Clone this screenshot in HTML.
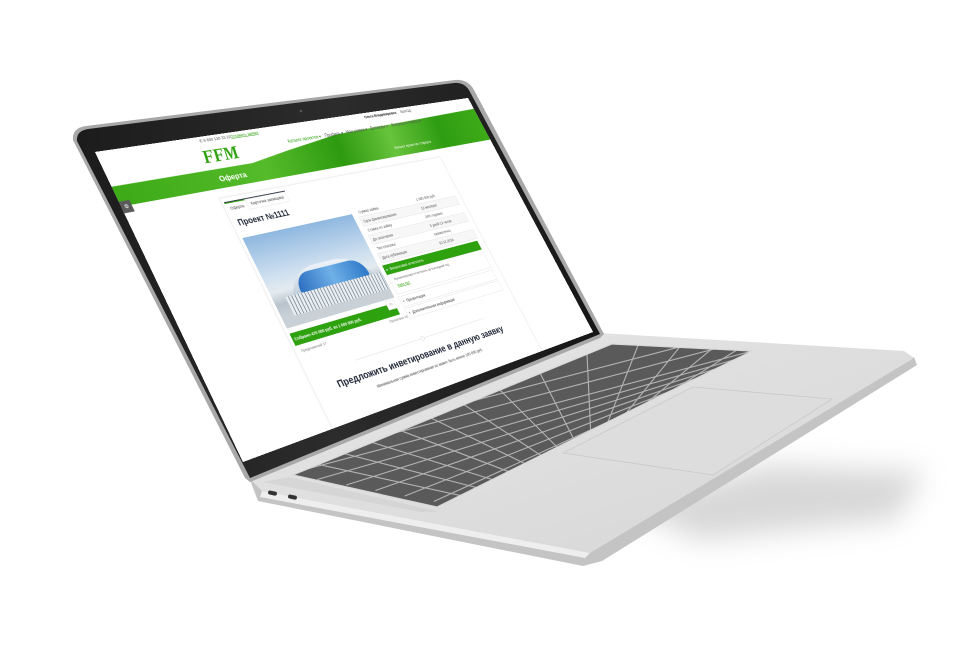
<!DOCTYPE html>
<html><head><meta charset="utf-8">
<style>
html,body{margin:0;padding:0;background:#fff;width:974px;height:649px;overflow:hidden;font-family:"Liberation Sans",sans-serif}
svg.lap{position:absolute;left:0;top:0}
#scr{position:absolute;left:0;top:0;width:1000px;height:625px;background:#fff;overflow:hidden;transform-origin:0 0;
transform:matrix3d(0.51409,-0.024455,0,0.00030148, 0.22048,0.46499,0,-0.00006713, 0,0,1,0, 95,152,0,1);}
#scr div,#scr span{position:absolute;white-space:nowrap}
.g{color:#2ea10f}
.nav{top:34px;font-size:10px;color:#555}
.row{left:510px;width:290px;height:21px;font-size:9px;color:#555}
.row .k{left:6px;top:6px}
.row .v{left:175px;top:6px}
.box{border:1px solid #e3e3e3;background:#fff}
</style></head><body>
<svg class="lap" width="974" height="649" viewBox="0 0 974 649">
<defs>
<filter id="bl" x="-50%" y="-50%" width="200%" height="200%"><feGaussianBlur stdDeviation="14"/></filter>
<linearGradient id="base" x1="0" y1="0" x2="1" y2="1">
<stop offset="0" stop-color="#e6e6e6"/><stop offset="1" stop-color="#d6d6d6"/></linearGradient>
<linearGradient id="bez" x1="0" y1="0" x2="1" y2="0">
<stop offset="0" stop-color="#1c1c1c"/><stop offset="0.5" stop-color="#2c2c2c"/><stop offset="1" stop-color="#161616"/></linearGradient>
<clipPath id="kb"><polygon points="293,475 612,344 752,351 660,396 437,507"/></clipPath>
</defs>
<polygon points="620,505 770,465 925,472 895,520 700,540" fill="#a8a8a8" opacity="0.45" filter="url(#bl)"/>
<polygon points="250,480 258,501 583,566 602,561 917,365 914,357" fill="#c4c4c4"/>
<polygon points="248,477 600,333 904,351 914,358 590,553 262,491" fill="url(#base)"/>
<polygon points="262,491 590,553 585,558 260,497" fill="#eeeeee"/>
<polygon points="563,453 693,387 832,399 713,475" fill="#dddddd" stroke="#c9c9c9" stroke-width="0.8"/>
<g clip-path="url(#kb)">
<polygon points="293,475 612,344 752,351 660,396 437,507" fill="#5a5a5a"/>
<g stroke="#b4b4b4" stroke-width="1.1">
<line x1="288" y1="474" x2="756" y2="350"/>
<line x1="288" y1="461" x2="756" y2="338"/>
<line x1="288" y1="449" x2="756" y2="327"/>
<line x1="317.2" y1="479.5" x2="740.3" y2="358"/>
<line x1="346.3" y1="485" x2="724.7" y2="366"/>
<line x1="375.5" y1="490.5" x2="709" y2="374"/>
<line x1="404.7" y1="496" x2="693.3" y2="382"/>
<line x1="433.8" y1="501.5" x2="677.7" y2="390"/>
<line x1="477.2" y1="499.2" x2="165.6" y2="431"/>
<line x1="491.4" y1="491.4" x2="218.4" y2="421.2"/>
<line x1="505.6" y1="483.6" x2="271" y2="411.2"/>
<line x1="519.9" y1="475.9" x2="323.5" y2="401.3"/>
<line x1="534.1" y1="468.1" x2="376.1" y2="391.3"/>
<line x1="548.3" y1="460.3" x2="428.9" y2="381.5"/>
<line x1="562.5" y1="452.5" x2="481.5" y2="371.5"/>
<line x1="576.7" y1="444.7" x2="534.1" y2="361.5"/>
<line x1="590.9" y1="436.9" x2="586.9" y2="351.7"/>
<line x1="605.1" y1="429.1" x2="639.5" y2="341.7"/>
<line x1="619.4" y1="421.4" x2="692" y2="331.8"/>
<line x1="633.6" y1="413.6" x2="744.6" y2="321.8"/>
<line x1="647.8" y1="405.8" x2="797.4" y2="312"/>
</g>
</g>
<polygon points="293,475 612,344 752,351 660,396 437,507" fill="none" stroke="#d8d8d8" stroke-width="1.2"/>
<polygon points="262,482 290,477 440,512 420,512" fill="#cfcfcf" opacity="0.6"/>
<rect x="268" y="491" width="9" height="4" rx="2" fill="#333" transform="rotate(12 272 493)"/>
<rect x="288" y="495" width="9" height="4" rx="2" fill="#333" transform="rotate(12 292 497)"/>
<path d="M73,140 Q72,128 86,126 L455,80 Q468,79 474,90 L604,334 L600,338 L250,482 L245,478 Z" fill="#a8a8a8"/>
<path d="M77,141 Q76,131 88,129 L454,83 Q465,82 470,92 L600,334 L250,478 Z" fill="url(#bez)"/>
<polygon points="95,152 468,98 593,332 243,462" fill="#fff"/>
<circle cx="301" cy="111" r="1.3" fill="#555"/>
</svg>

<div id="scr">
  <div style="left:225px;top:4px;font-size:9px;color:#555">✆ 8 800 120 33 22</div>
  <div class="g" style="left:300px;top:4px;font-size:9px;text-decoration:underline">Оставить заявку</div>
  <div style="left:660px;top:5px;font-size:9px;color:#222;font-weight:bold">Ольга Владимировна</div>
  <div style="left:770px;top:5px;font-size:9px;color:#555">ВЫХОД</div>
  <div style="left:0;top:28px;width:1000px;height:86px;background:linear-gradient(180deg,rgba(255,255,255,0) 0%,rgba(255,255,255,0) 52%,#3aa514 52%);"></div>
  <div style="left:0;top:28px;width:1000px;height:86px;clip-path:polygon(32% 52%,42% 35%,56% 14%,100% 2%,100% 100%,0 100%,0 52%);background:linear-gradient(100deg,#3ca916 0%,#55bb2a 35%,#2e9a10 55%,#67c33c 70%,#2f9d12 85%,#3eab18 100%)"></div>
  <div style="left:215px;top:20px;font-size:40px;font-weight:bold;font-style:italic;color:#2fa30f;font-family:'Liberation Serif',serif;letter-spacing:-2px">FFM</div>
  <div class="nav" style="left:430px;color:#2ea10f">Каталог проектов ▾</div>
  <div class="nav" style="left:530px">Профиль ▾</div>
  <div class="nav" style="left:590px">Мои заявки ▾</div>
  <div class="nav" style="left:660px">Договоры ▾</div>
  <div class="nav" style="left:725px">Вопросы и ответы ▾</div>
  <div style="left:228px;top:85px;font-size:17px;font-weight:bold;color:#fff">Оферта</div>
  <div style="left:700px;top:88px;font-size:9px;color:#fff">Каталог проектов / Оферта</div>
  <div style="left:0;top:104px;width:22px;height:24px;background:#5a5a5a;color:#fff;font-size:11px;text-align:center;line-height:24px">⚙</div>
  <div class="box" style="left:207px;top:133px;width:608px;height:520px;box-shadow:0 0 6px rgba(0,0,0,.06)"></div>
  <div style="left:213px;top:143px;width:150px;height:22px;border-top:2px solid #3a4050"></div>
  <div style="left:213px;top:145px;width:48px;height:22px;border-top:2px solid #2ea10f;font-size:9px;color:#444;text-align:center;line-height:22px">Оферта</div>
  <div class="box" style="left:262px;top:145px;width:98px;height:21px;font-size:9px;color:#444;text-align:center;line-height:21px">Карточка заемщика</div>
  <div style="left:222px;top:180px;font-size:18px;font-weight:bold;color:#1d2433">Проект №1111</div>
  <div style="left:215px;top:222px;width:282px;height:195px;background:linear-gradient(180deg,#8fb8e0 0%,#cfe0f0 45%,#e4ebf0 62%,#b9c3cc 75%,#d8dee3 100%);overflow:hidden">
    <div style="left:40px;top:85px;width:230px;height:90px;border-radius:120px 120px 0 0;background:linear-gradient(180deg,#eef3f8,#9ab0c6);"></div>
    <div style="left:70px;top:95px;width:180px;height:40px;border-radius:90px 90px 10px 10px;background:linear-gradient(90deg,#2c6fc0,#6fb0e8,#2d78c8);"></div>
    <div style="left:30px;top:135px;width:250px;height:40px;background:repeating-linear-gradient(90deg,#e9eef2 0 6px,#7c8a98 6px 8px)"></div>
    <div style="left:0;top:175px;width:282px;height:20px;background:#c9d0d6"></div>
  </div>
  <div class="row" style="top:210px"><span class="k">Сумма займа</span><span class="v">1 000 000 руб.</span></div>
  <div class="row box" style="top:231px;background:#f7f7f7"><span class="k">Срок финансирования</span><span class="v">12 месяцев</span></div>
  <div class="row" style="top:253px"><span class="k">Ставка по займу</span><span class="v">24% годовых</span></div>
  <div class="row box" style="top:274px;background:#f7f7f7"><span class="k">До окончания</span><span class="v">5 дней 12 часов</span></div>
  <div class="row" style="top:296px"><span class="k">Тип платежа</span><span class="v">ежемесячно</span></div>
  <div class="row box" style="top:317px;background:#f7f7f7"><span class="k">Дата публикации</span><span class="v">10.12.2019</span></div>
  <div style="left:507px;top:345px;width:290px;height:22px;background:#2ea10f;color:#fff;font-size:9px;line-height:22px">&nbsp;&nbsp;▸&nbsp; Финансовая отчетность</div>
  <div class="box" style="left:507px;top:367px;width:288px;height:44px"></div>
  <div style="left:520px;top:375px;font-size:8px;color:#666">Бухгалтерская отчетность за последний год</div>
  <div class="g" style="left:520px;top:390px;font-size:8px;text-decoration:underline">Файл №2</div>
  <div class="box" style="left:507px;top:418px;width:288px;height:22px;font-size:9px;color:#333;line-height:22px">&nbsp;&nbsp;+&nbsp; Презентация</div>
  <div class="box" style="left:507px;top:445px;width:288px;height:22px;font-size:9px;color:#333;line-height:22px">&nbsp;&nbsp;+&nbsp; Дополнительная информация</div>
  <div style="left:215px;top:428px;width:275px;height:26px;background:#2ea10f;color:#fff;font-size:9px;font-weight:bold;line-height:26px">&nbsp;&nbsp;Собрано 470 000 руб. из 1 000 000 руб.</div>
  <div class="box" style="left:468px;top:420px;width:22px;height:18px;font-size:7px;color:#aaa;text-align:center;line-height:18px">0%</div>
  <div style="left:455px;top:458px;font-size:8px;color:#777">Прочитано 16</div>
  <div style="left:222px;top:462px;font-size:8px;color:#777">Предложений 17</div>
  <div style="left:330px;top:515px;width:370px;height:1px;background:#ddd"></div>
  <div style="left:510px;top:511px;width:8px;height:8px;border-radius:50%;border:1px solid #ccc;background:#fff"></div>
  <div style="left:0;top:538px;width:1004px;text-align:center;font-size:21px;font-weight:bold;color:#1d2433">Предложить инветирование в данную заявку</div>
  <div style="left:0;top:573px;width:1004px;text-align:center;font-size:9px;color:#444">Минимальная сумма инвестирования не может быть менее 100 000 руб.</div>
</div>
</body></html>
